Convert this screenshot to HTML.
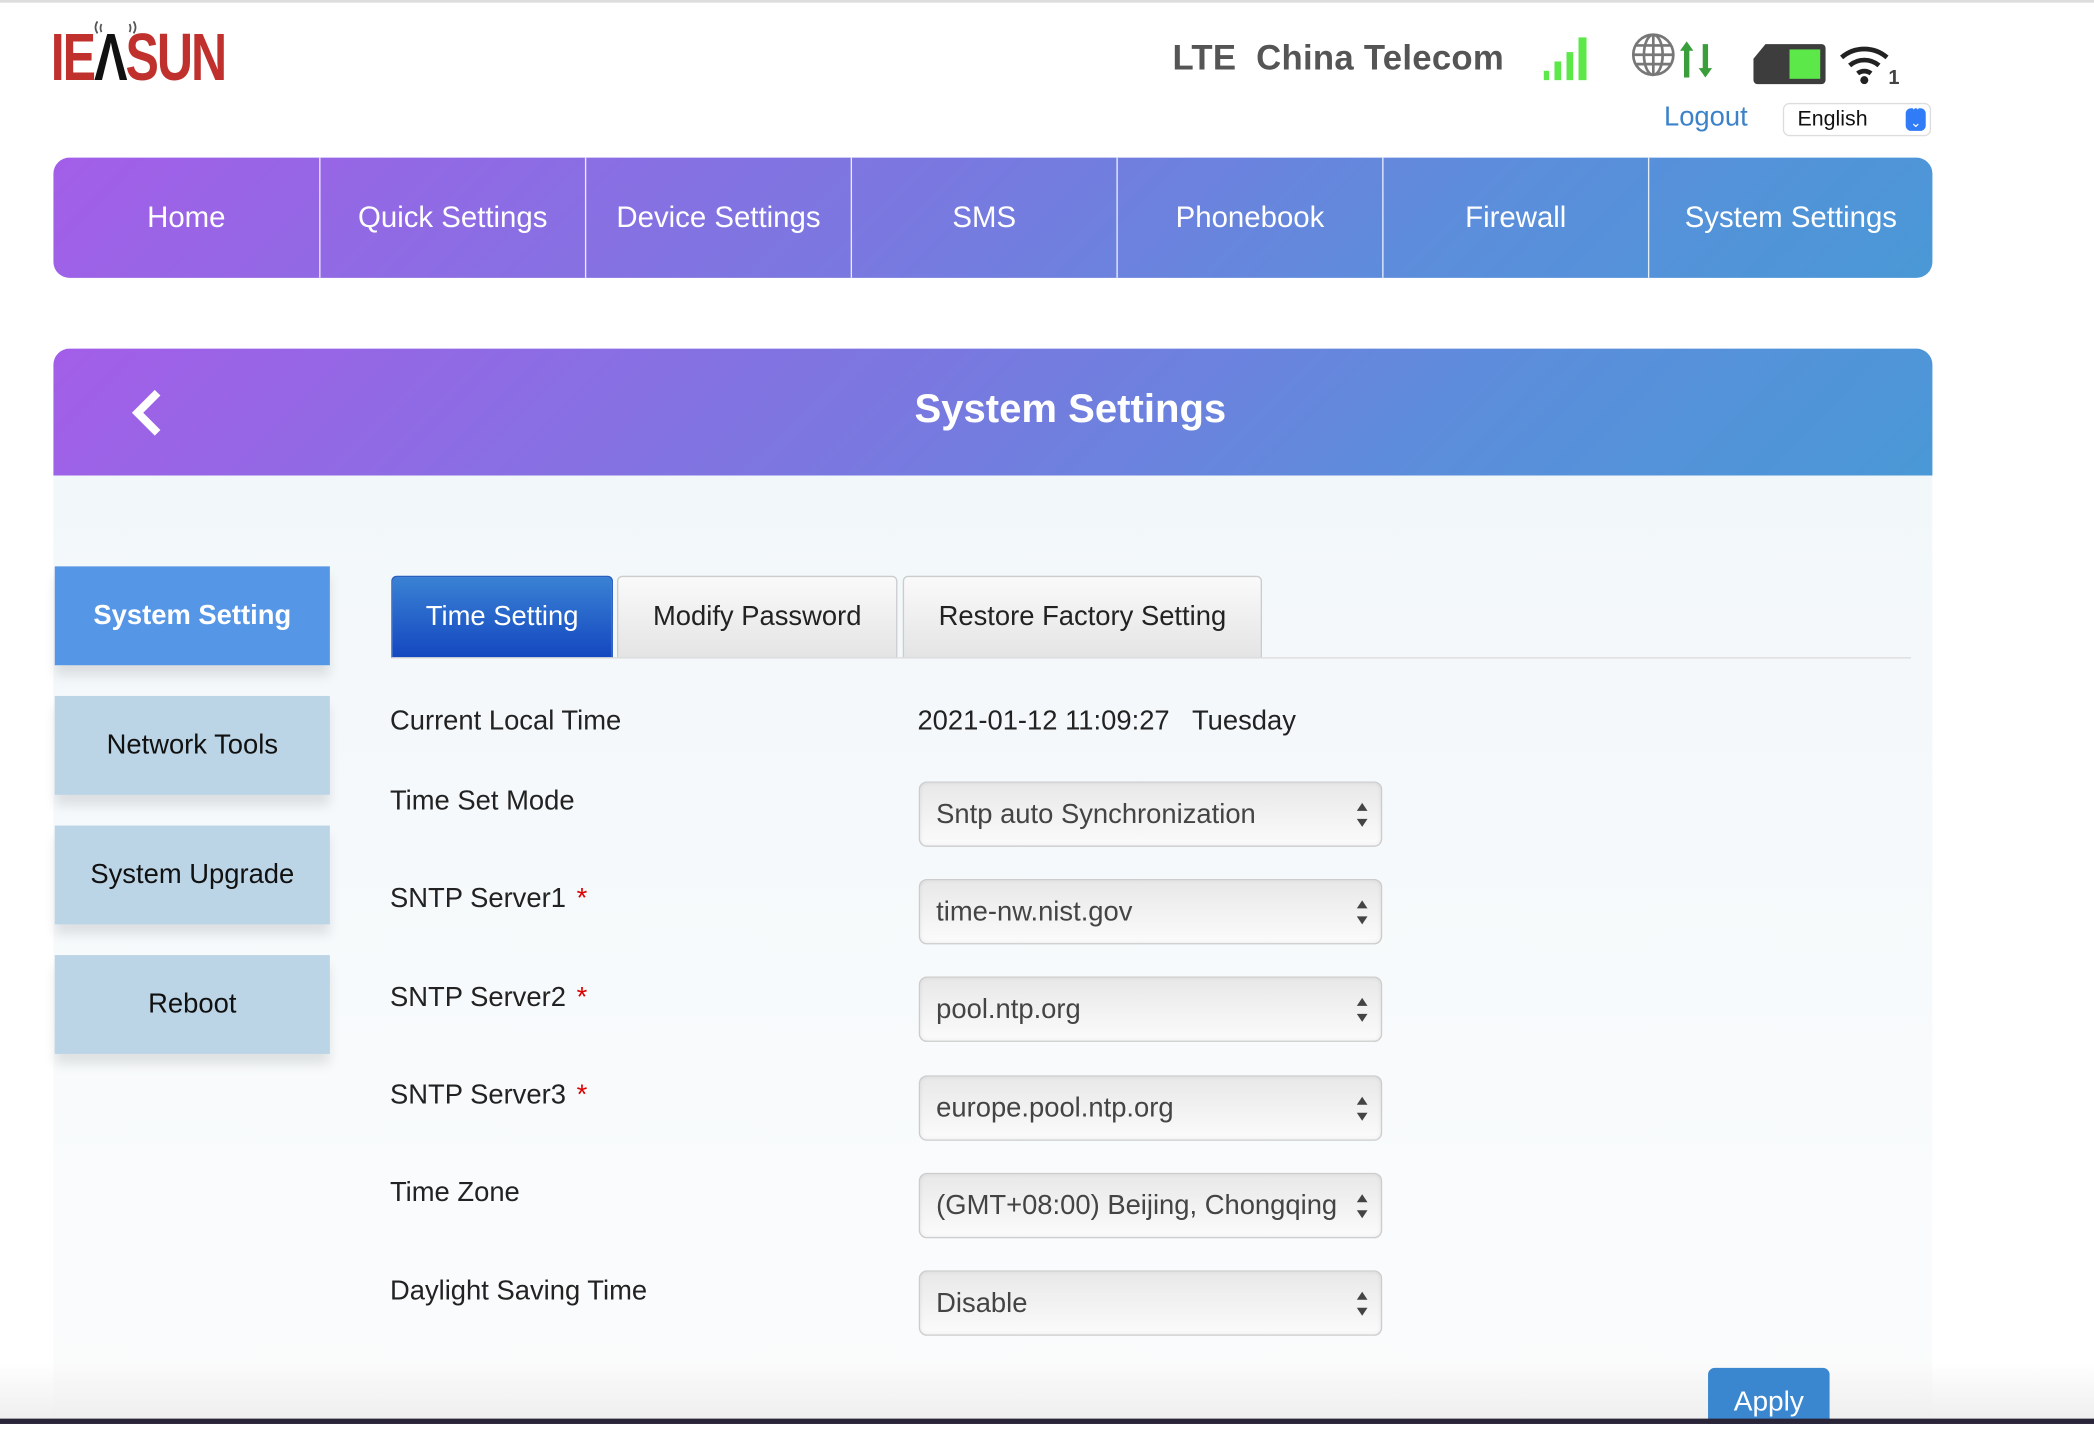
<!DOCTYPE html>
<html><head><meta charset="utf-8"><style>
html,body{margin:0;padding:0;width:2094px;height:1424px;overflow:hidden;background:#fff;font-family:"Liberation Sans",Arial,sans-serif}
#w{position:absolute;left:0;top:0;width:1568px;height:1066px;transform:scale(1.33546,1.3358);transform-origin:0 0;background:#fff}
.a{position:absolute}
.grad{background:linear-gradient(135deg,#a35ee8 0%,#7a78e0 45%,#5b8edb 75%,#4a98d6 100%)}
.nav{left:40px;top:118px;width:1407px;height:90px;border-radius:12px;display:flex;overflow:hidden}
.nav div{flex:0 0 199px;box-sizing:border-box;white-space:nowrap;color:#fff;font-size:22px;display:flex;align-items:center;justify-content:center;border-left:1px solid rgba(255,255,255,.85)}
.nav div:first-child{border-left:none}
.nav div:last-child{flex:1 1 0}
.side{left:41px;width:206px;height:74px;background:#bcd5e6;display:flex;align-items:center;justify-content:center;font-size:20.5px;color:#111;box-shadow:0 8px 8px rgba(0,0,0,.1)}
.tab{top:431px;height:62px;display:flex;align-items:center;justify-content:center;font-size:20.5px;color:#222;background:linear-gradient(#fafafa,#e4e4e4);border:1px solid #ccc;box-sizing:border-box;border-radius:4px 4px 0 0}
.lbl{left:292px;font-size:20.5px;color:#222}
.lbl b{color:#d00;font-weight:normal;margin-left:8px}
.sel{left:688px;width:347px;height:49px;box-sizing:border-box;border:1px solid #ccc;border-radius:6px;background:linear-gradient(#e8e8e8,#fbfbfb);font-size:20.5px;color:#444;padding:0 36px 0 12px;line-height:47px;white-space:nowrap;overflow:hidden;box-shadow:inset 0 0 3px rgba(0,0,0,.08)}
.sel:after{content:"";position:absolute;right:10px;top:15px;border:4px solid transparent;border-bottom:6px solid #444;border-top:none}
.sel:before{content:"";position:absolute;right:10px;top:27px;border:4px solid transparent;border-top:6px solid #444;border-bottom:none}
</style></head><body><div id="w">
<div class="a" style="left:0;top:0;width:1568px;height:2px;background:#ddd"></div>
<div class="a" style="left:38px;top:16px;font-size:50px;font-weight:bold;color:#c0312e;letter-spacing:-2px;transform:scaleX(.75);transform-origin:0 0;line-height:54px">IE<span style="color:#111">Λ</span>SUN</div>
<svg class="a" style="left:64px;top:12px" width="50" height="16"><path d="M9 13c-2-3-2-6 0-9M12 12c-1-2-1-4 0-6M36 13c2-3 2-6 0-9M33 12c1-2 1-4 0-6" stroke="#555" stroke-width="1.3" fill="none"/></svg>
<div class="a" style="left:878px;top:28px;font-size:26px;font-weight:bold;color:#555;letter-spacing:.2px">LTE&nbsp; China Telecom</div>
<svg class="a" style="left:1154px;top:26px" width="40" height="36"><g fill="#5de84a"><rect x="2" y="27" width="4" height="7"/><rect x="10" y="20" width="5" height="14"/><rect x="19" y="13" width="5" height="21"/><rect x="28" y="2" width="6" height="32"/></g></svg>
<svg class="a" style="left:1220px;top:24px" width="66" height="38"><g stroke="#777" stroke-width="2" fill="none"><circle cx="18" cy="17" r="15"/><ellipse cx="18" cy="17" rx="7" ry="15"/><line x1="18" y1="2" x2="18" y2="32"/><line x1="3" y1="17" x2="33" y2="17"/><line x1="5" y1="10" x2="31" y2="10"/><line x1="5" y1="24" x2="31" y2="24"/></g><g fill="#3a9e3a"><path d="M38 14l5-7 5 7h-3v20h-4V14z"/><path d="M52 27h3V9h4v18h3l-5 7z"/></g></svg>
<svg class="a" style="left:1312px;top:32px" width="56" height="32"><path d="M10 1h42a3 3 0 0 1 3 3v24a3 3 0 0 1-3 3H4a3 3 0 0 1-3-3V12z" fill="#3d3d3d"/><rect x="28" y="5" width="23" height="22" fill="#5de84a"/></svg>
<svg class="a" style="left:1376px;top:32px" width="48" height="34"><g fill="none" stroke="#222" stroke-width="3.5"><path d="M3 11a26 26 0 0 1 34 0"/><path d="M9 17a17 17 0 0 1 22 0"/><path d="M15 23a8 8 0 0 1 10 0"/></g><circle cx="20" cy="28" r="3" fill="#222"/><text x="38" y="31" font-size="15" font-weight="bold" fill="#444" font-family="Liberation Sans">1</text></svg>
<div class="a" style="left:1246px;top:76px;font-size:20.5px;color:#3b82c8">Logout</div>
<div class="a" style="left:1335px;top:77px;width:111px;height:25px;box-sizing:border-box;border:1px solid #ddd;border-radius:5px;background:#fff;font-size:16px;line-height:23px;padding-left:10px;color:#111">English<span style="position:absolute;right:3px;top:3px;width:15px;height:17px;border-radius:4px;background:#2f7cf6;color:#fff;font-size:10px;line-height:8px;text-align:center">⌃<br>⌄</span></div>
<div class="a nav grad"><div>Home</div><div>Quick Settings</div><div>Device Settings</div><div>SMS</div><div>Phonebook</div><div>Firewall</div><div>System Settings</div></div>
<div class="a grad" style="left:40px;top:261px;width:1407px;height:95px;border-radius:12px 12px 0 0"></div>
<svg class="a" style="left:94px;top:290px" width="32" height="40"><path d="M24 4L9 19l15 15" stroke="#fff" stroke-width="6" fill="none"/></svg>
<div class="a" style="left:40px;top:290px;width:1523px;text-align:center;font-size:30px;font-weight:bold;color:#fff">System Settings</div>
<div class="a" style="left:40px;top:356px;width:1407px;height:710px;background:linear-gradient(#f2f7fa 0%,#f9fbfc 75%,#fbfbfb 100%)"></div>
<div class="a" style="left:0;top:1020px;width:1568px;height:42px;background:linear-gradient(rgba(250,250,250,0),#efefef)"></div>
<div class="a side" style="top:424px;background:#5596e6;color:#fff;font-weight:bold">System Setting</div>
<div class="a side" style="top:521px">Network Tools</div>
<div class="a side" style="top:618px">System Upgrade</div>
<div class="a side" style="top:715px">Reboot</div>
<div class="a tab" style="left:293px;width:166px;background:linear-gradient(#3a82d4,#1447c0);color:#fff;border-color:#2a5fc0">Time Setting</div>
<div class="a tab" style="left:462px;width:210px">Modify Password</div>
<div class="a tab" style="left:676px;width:269px">Restore Factory Setting</div>
<div class="a" style="left:293px;top:492px;width:1138px;height:1px;background:#ddd"></div>
<div class="a lbl" style="top:528px">Current Local Time</div>
<div class="a" style="left:687px;top:528px;font-size:20.5px;color:#222">2021-01-12 11:09:27 &nbsp; Tuesday</div>
<div class="a lbl" style="top:588px">Time Set Mode</div>
<div class="a sel" style="top:585px">Sntp auto Synchronization</div>
<div class="a lbl" style="top:661px">SNTP Server1<b>*</b></div>
<div class="a sel" style="top:658px">time-nw.nist.gov</div>
<div class="a lbl" style="top:735px">SNTP Server2<b>*</b></div>
<div class="a sel" style="top:731px">pool.ntp.org</div>
<div class="a lbl" style="top:808px">SNTP Server3<b>*</b></div>
<div class="a sel" style="top:805px">europe.pool.ntp.org</div>
<div class="a lbl" style="top:881px">Time Zone</div>
<div class="a sel" style="top:878px">(GMT+08:00) Beijing, Chongqing</div>
<div class="a lbl" style="top:955px">Daylight Saving Time</div>
<div class="a sel" style="top:951px">Disable</div>
<div class="a" style="left:1279px;top:1024px;width:91px;height:42px;background:#3a87d0;border-radius:5px 5px 0 0;color:#fff;font-size:21px;text-align:center;line-height:52px">Apply</div>
<div class="a" style="left:0;top:1062px;width:1568px;height:4px;background:#2a2438"></div>
</div></body></html>
